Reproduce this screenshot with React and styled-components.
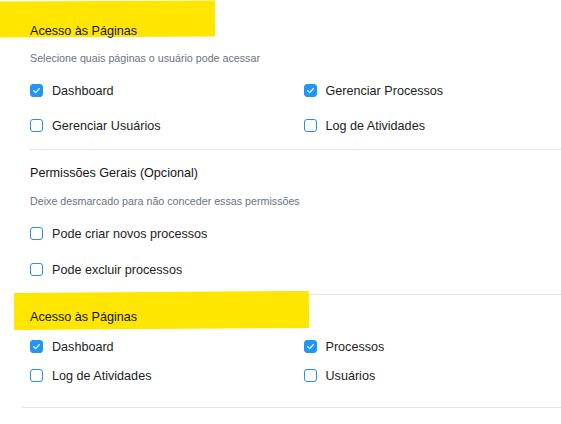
import styled, { createGlobalStyle } from "styled-components";

const GlobalStyle = createGlobalStyle`
  html, body {
    margin: 0;
    padding: 0;
    background: #ffffff;
  }
  body {
    font-family: "Liberation Sans", Arial, sans-serif;
    color: #1a1a1a;
    overflow: hidden;
  }
`;

const pageAccess = [
  { label: "Dashboard", checked: true },
  { label: "Gerenciar Processos", checked: true },
  { label: "Gerenciar Usuários", checked: false },
  { label: "Log de Atividades", checked: false },
];

const generalPerms = [
  { label: "Pode criar novos processos", checked: false },
  { label: "Pode excluir processos", checked: false },
];

const pageAccessShort = [
  { label: "Dashboard", checked: true },
  { label: "Processos", checked: true },
  { label: "Log de Atividades", checked: false },
  { label: "Usuários", checked: false },
];

const CheckBox = ({ checked }) => (
  <Box $checked={checked}>
    {checked && (
      <svg width="9" height="9" viewBox="0 0 10 10" fill="none">
        <path
          d="M1.8 5.2 L4 7.3 L8.3 2.8"
          stroke="#ffffff"
          strokeWidth="1.3"
          strokeLinecap="round"
          strokeLinejoin="round"
        />
      </svg>
    )}
  </Box>
);

const Option = ({ label, checked }) => (
  <OptionLabel>
    <CheckBox checked={checked} />
    <span>{label}</span>
  </OptionLabel>
);

const App = () => {
  return (
    <>
      <GlobalStyle />
      <Page>
        <Section $top={23} $bottom={13}>
          <Heading $marker="first">Acesso às Páginas</Heading>
          <Hint $gap={12}>Selecione quais páginas o usuário pode acessar</Hint>
          <OptionGrid $cols={2} $top={16} $rowGap={15}>
            {pageAccess.map((o) => (
              <Option key={o.label} {...o} />
            ))}
          </OptionGrid>
        </Section>

        <Section $top={15} $bottom={14}>
          <Heading>Permissões Gerais (Opcional)</Heading>
          <Hint $gap={13}>Deixe desmarcado para não conceder essas permissões</Hint>
          <OptionGrid $cols={1} $top={16} $rowGap={16}>
            {generalPerms.map((o) => (
              <Option key={o.label} {...o} />
            ))}
          </OptionGrid>
        </Section>

        <LastSection>
          <Heading $marker="second">Acesso às Páginas</Heading>
          <OptionGrid $cols={2} $top={12} $rowGap={9}>
            {pageAccessShort.map((o) => (
              <Option key={o.label} {...o} />
            ))}
          </OptionGrid>
        </LastSection>
      </Page>
    </>
  );
};

export default App;

const Page = styled.div`
  padding-left: 22px;
  width: 561px;
  box-sizing: border-box;
`;

const Section = styled.section`
  margin-left: 8px;
  padding: ${(p) => p.$top}px 0 ${(p) => p.$bottom}px;
  border-bottom: 1px solid #e4e4e4;
`;

const LastSection = styled.section`
  padding: 14px 0 21px 8px;
  border-bottom: 1px solid #e4e4e4;
`;

const markers = {
  first: `
    left: -30px;
    top: -22px;
    width: 215px;
    height: 36px;
    transform: rotate(-0.2deg);
  `,
  second: `
    left: -16px;
    top: -17px;
    width: 295px;
    height: 37px;
    transform: rotate(-0.4deg);
  `,
};

const Heading = styled.h3`
  position: relative;
  isolation: isolate;
  margin: 0;
  font-size: 12.6px;
  line-height: 16px;
  font-weight: 400;
  color: #141414;

  ${(p) =>
    p.$marker &&
    `
    &::before {
      content: "";
      position: absolute;
      z-index: -1;
      background: #ffe600;
      ${markers[p.$marker]}
    }
  `}
`;

const Hint = styled.p`
  margin: ${(p) => p.$gap}px 0 0;
  font-size: 10.7px;
  line-height: 14px;
  color: #6b7280;
`;

const OptionGrid = styled.div`
  display: grid;
  grid-template-columns: repeat(${(p) => p.$cols}, 1fr);
  column-gap: 16px;
  row-gap: ${(p) => p.$rowGap}px;
  margin-top: ${(p) => p.$top}px;
`;

const OptionLabel = styled.label`
  display: flex;
  align-items: center;
  gap: 9px;
  height: 20px;
  font-size: 12.6px;
  color: #1c1c1c;
  cursor: pointer;
`;

const Box = styled.span`
  display: inline-flex;
  align-items: center;
  justify-content: center;
  flex: none;
  width: 13px;
  height: 13px;
  box-sizing: border-box;
  border-radius: 3px;
  margin-top: -2px;
  border: 1px solid ${(p) => (p.$checked ? "#2196f3" : "#2f8de4")};
  background: ${(p) => (p.$checked ? "#2196f3" : "#ffffff")};
`;
